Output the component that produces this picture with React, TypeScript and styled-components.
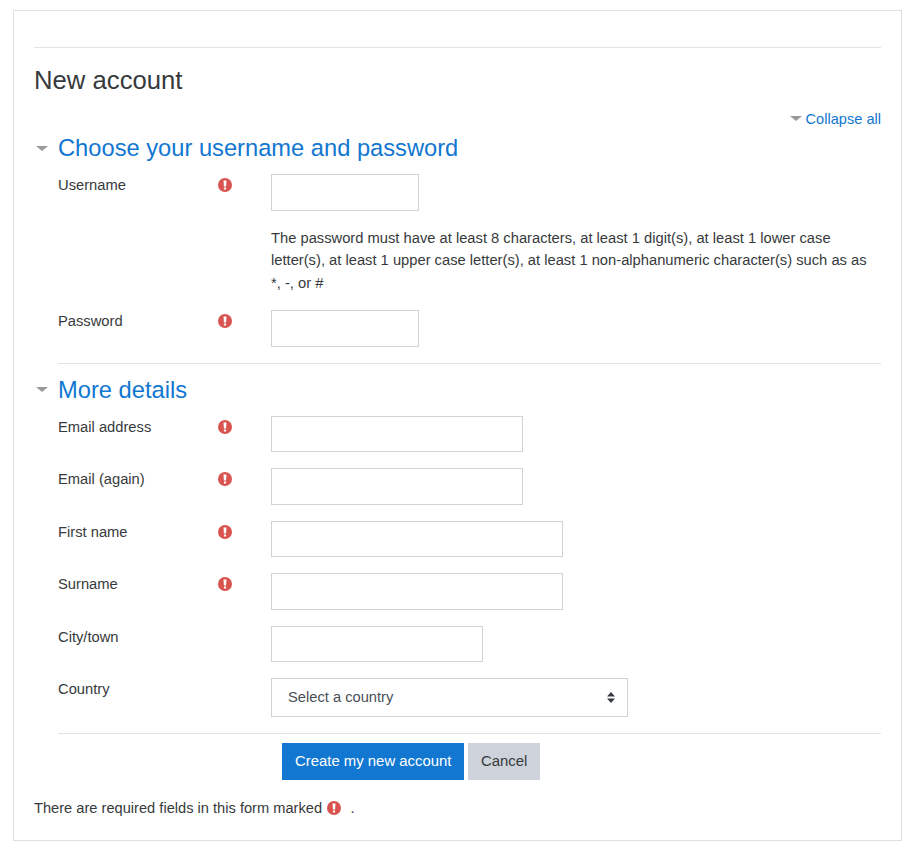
import React from "react";
import styled, { createGlobalStyle } from "styled-components";

const GlobalStyle = createGlobalStyle`
  html, body {
    margin: 0;
    background: #fff;
  }
  body {
    font-family: "Liberation Sans", Arial, sans-serif;
    font-size: 14.72px;
    line-height: 22.5px;
    color: #373a3c;
  }
`;

const Card = styled.div`
  margin: 10px 14px 8px 13px;
  padding: 36px 20px 20.5px;
  border: 1px solid #dfdfdf;
`;

const TopRule = styled.hr`
  margin: 0;
  border: 0;
  border-top: 1px solid #e3e3e3;
`;

const Title = styled.h2`
  margin: 17px 0 0;
  font-size: 25.7px;
  font-weight: 400;
  line-height: 30px;
`;

const CollapseRow = styled.div`
  display: flex;
  justify-content: flex-end;
  margin-top: 12.5px;
  height: 22.5px;
`;

const CollapseLink = styled.a`
  display: flex;
  align-items: center;
  gap: 4px;
  color: #1177d1;
  font-size: 14.6px;
  text-decoration: none;
`;

const Caret = styled.span<{ $size: number }>`
  display: inline-block;
  width: 0;
  height: 0;
  border-left: ${(p) => p.$size}px solid transparent;
  border-right: ${(p) => p.$size}px solid transparent;
  border-top: ${(p) => p.$size - 1}px solid #999;
`;

const SectionHead = styled.div`
  display: flex;
  align-items: center;
  height: 28px;
`;

const FirstHead = styled(SectionHead)`
  margin-top: 4px;
`;

const CaretSlot = styled.span`
  display: flex;
  width: 24px;
  padding-left: 2px;
  box-sizing: border-box;
`;

const SectionTitle = styled.h3`
  margin: 0;
  color: #1177d1;
  font-size: 23.7px;
  font-weight: 400;
  line-height: 28px;
`;

const Fields = styled.div`
  padding: 12px 0 0 24px;
`;

const Row = styled.div`
  display: grid;
  grid-template-columns: 160px 53px 1fr;
  margin-bottom: 16px;
`;

const Label = styled.label`
  display: block;
`;

const Required = styled.span`
  display: inline-flex;
  align-items: center;
  height: 22.5px;
`;

const Input = styled.input<{ $w: number }>`
  display: block;
  box-sizing: border-box;
  width: ${(p) => p.$w}px;
  height: 36.5px;
  padding: 6px 12px;
  border: 1px solid #ced4da;
  border-radius: 0;
  background: #fff;
`;

const Select = styled.select`
  display: block;
  box-sizing: border-box;
  width: 357px;
  height: 38.5px;
  padding: 0 28px 0 16px;
  border: 1px solid #ced4da;
  border-radius: 0;
  appearance: none;
  font-family: inherit;
  font-size: 14.7px;
  color: #495057;
  background: #fff
    url("data:image/svg+xml,%3Csvg xmlns='http://www.w3.org/2000/svg' width='8' height='11'%3E%3Cpath fill='%23343a40' d='M4 0l4 4.5H0zM4 11L0 6.5h8z'/%3E%3C/svg%3E")
    no-repeat right 12px center;
`;

const HelpRow = styled.div`
  margin: 0 6px 16px 213px;
`;

const Divider = styled.hr`
  margin: 0 0 0 24px;
  border: 0;
  border-top: 1px solid #e3e3e3;
`;

const SectionGap = styled.div`
  height: 12px;
`;

const Actions = styled.div`
  display: flex;
  gap: 4px;
  margin: 9px 0 0 248px;
`;

const Button = styled.button<{ $primary?: boolean }>`
  height: 37px;
  padding: 0 ${(p) => (p.$primary ? 13 : 12.5)}px;
  border: 0;
  border-radius: 0;
  font-family: inherit;
  font-size: 14.9px;
  color: ${(p) => (p.$primary ? "#fff" : "#373a3c")};
  background: ${(p) => (p.$primary ? "#1177d1" : "#ced3db")};
`;

const RequiredNote = styled.p`
  display: flex;
  align-items: center;
  margin: 17.5px 0 0;
  font-size: 14.65px;
`;

const NoteIcon = styled(Required)`
  margin: 0 9.5px 0 5px;
`;

// same glyph as the theme's exclamation-circle, heavier than the FA5 one
const AlertIcon = () => (
  <svg width="14" height="14" viewBox="0 0 14 14" aria-hidden="true">
    <path
      fill="#d9534f"
      fillRule="evenodd"
      d="M7 0a7 7 0 1 1 0 14A7 7 0 0 1 7 0zM5.5 2.6l.4 6h2.2l.4-6zM5.9 9.6v2h2.2v-2z"
    />
  </svg>
);

const req = (
  <Required>
    <AlertIcon />
  </Required>
);

type Field = { label: string; width: number; required?: boolean };

const detailFields: Field[] = [
  { label: "Email address", width: 252, required: true },
  { label: "Email (again)", width: 252, required: true },
  { label: "First name", width: 292, required: true },
  { label: "Surname", width: 292, required: true },
  { label: "City/town", width: 212 },
];

export default function App() {
  return (
    <>
      <GlobalStyle />
      <Card>
        <TopRule />
        <Title>New account</Title>
        <CollapseRow>
          <CollapseLink href="#">
            <Caret $size={6} />
            Collapse all
          </CollapseLink>
        </CollapseRow>

        <section>
          <FirstHead>
            <CaretSlot>
              <Caret $size={6} />
            </CaretSlot>
            <SectionTitle>Choose your username and password</SectionTitle>
          </FirstHead>
          <Fields>
            <Row>
              <Label>Username</Label>
              {req}
              <Input $w={148} type="text" />
            </Row>
            <HelpRow>
              The password must have at least 8 characters, at least 1 digit(s), at least 1 lower
              case letter(s), at least 1 upper case letter(s), at least 1 non-alphanumeric
              character(s) such as as *, -, or #
            </HelpRow>
            <Row>
              <Label>Password</Label>
              {req}
              <Input $w={148} type="password" />
            </Row>
          </Fields>
          <Divider />
        </section>

        <SectionGap />

        <section>
          <SectionHead>
            <CaretSlot>
              <Caret $size={6} />
            </CaretSlot>
            <SectionTitle>More details</SectionTitle>
          </SectionHead>
          <Fields>
            {detailFields.map((f) => (
              <Row key={f.label}>
                <Label>{f.label}</Label>
                {f.required ? req : <span />}
                <Input $w={f.width} type="text" />
              </Row>
            ))}
            <Row>
              <Label>Country</Label>
              <span />
              <Select defaultValue="">
                <option value="">Select a country</option>
              </Select>
            </Row>
          </Fields>
          <Divider />
        </section>

        <Actions>
          <Button $primary>Create my new account</Button>
          <Button>Cancel</Button>
        </Actions>

        <RequiredNote>
          There are required fields in this form marked
          <NoteIcon>
            <AlertIcon />
          </NoteIcon>
          .
        </RequiredNote>
      </Card>
    </>
  );
}
